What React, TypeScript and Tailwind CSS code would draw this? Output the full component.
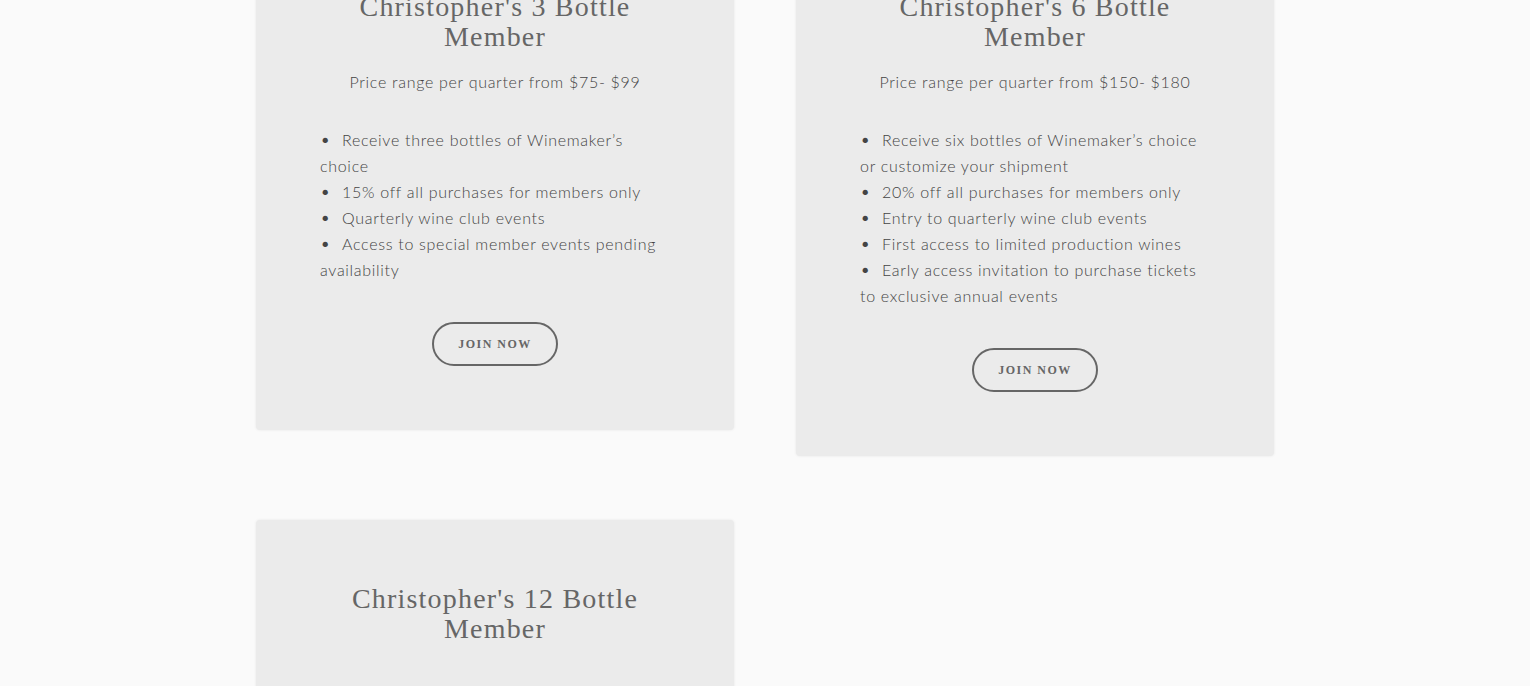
import React from 'react';

const plans = [
  {
    title: "Christopher's 3 Bottle Member",
    price: 'Price range per quarter from $75- $99',
    perks: [
      'Receive three bottles of Winemaker’s choice',
      '15% off all purchases for members only',
      'Quarterly wine club events',
      'Access to special member events pending availability',
    ],
  },
  {
    title: "Christopher's 6 Bottle Member",
    price: 'Price range per quarter from $150- $180',
    perks: [
      'Receive six bottles of Winemaker’s choice or customize your shipment',
      '20% off all purchases for members only',
      'Entry to quarterly wine club events',
      'First access to limited production wines',
      'Early access invitation to purchase tickets to exclusive annual events',
    ],
  },
  {
    title: "Christopher's 12 Bottle Member",
    price: '',
    perks: [],
  },
];

const serif = "font-['Liberation_Serif','Times_New_Roman',serif]";
const sans = "font-['Lato','Noto_Sans',sans-serif]";

function PlanCard({ plan }: { plan: (typeof plans)[number] }) {
  return (
    <div className="rounded-[4px] bg-[#ebebeb] px-16 pt-16 pb-16 shadow-[0_0_3px_rgba(0,0,0,0.08)]">
      <h2
        className={`${serif} mx-auto w-[310px] text-center text-[28px] leading-[30px] tracking-[1.2px] text-[#666]`}
      >
        {plan.title}
      </h2>
      {plan.price && (
        <>
          <p className={`${sans} mt-[17px] text-center text-[16px] leading-[26px] font-light tracking-[0.7px] text-[#444]`}>
            {plan.price}
          </p>
          <ul className={`${sans} mt-8 text-[16px] leading-[26px] font-light tracking-[0.7px] text-[#444]`}>
            {plan.perks.map(p => (
              <li key={p}>
                <span className="inline-block w-[22px] text-[18px] leading-[0]">•</span>
                {p}
              </li>
            ))}
          </ul>
          <div className="mt-[39px] flex justify-center">
            <button
              className={`${serif} h-[44px] w-[126px] rounded-full border-2 border-[#666] text-[12px] font-bold tracking-[1.5px] text-[#666]`}
            >
              JOIN NOW
            </button>
          </div>
        </>
      )}
      {!plan.price && <div className="h-[80px]" />}
    </div>
  );
}

export default function App() {
  return (
    <div className="min-h-screen overflow-hidden bg-[#fafafa]">
      <div className="mx-auto -mt-[72px] grid w-[1018px] grid-cols-2 items-start gap-x-[62px] gap-y-16">
        {plans.map(p => (
          <PlanCard key={p.title} plan={p} />
        ))}
      </div>
    </div>
  );
}
